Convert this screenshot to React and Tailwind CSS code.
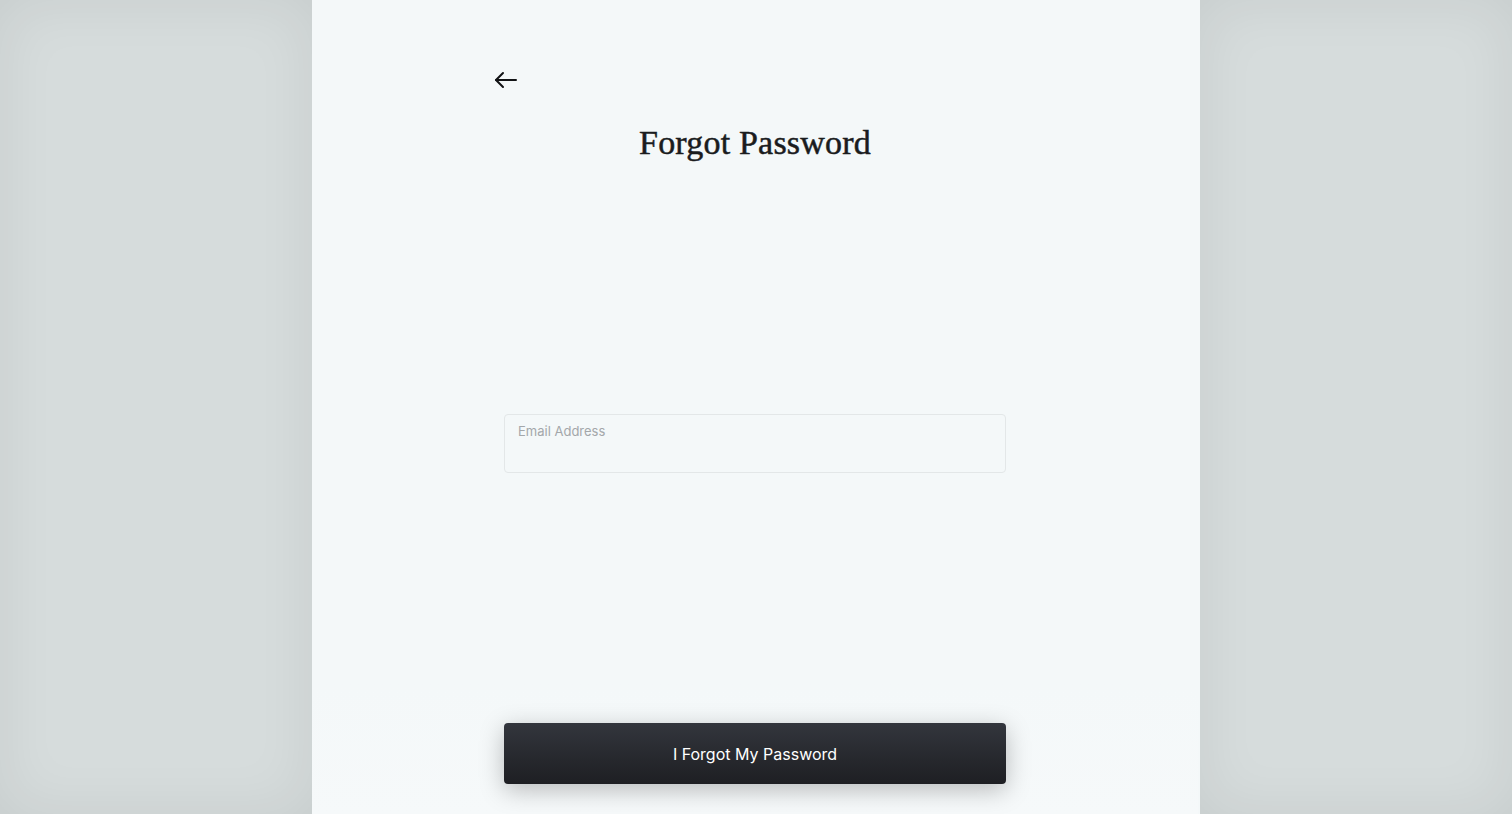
export default function App() {
  return (
    <div className="flex h-screen w-full bg-[#d6dcdc]" style={{ fontFamily: "Inter, 'Liberation Sans', sans-serif" }}>
      <div className="flex-1 shadow-[inset_0_0_60px_rgba(0,0,0,0.07)]" />
      <div className="relative flex w-[888px] flex-col items-center bg-[#f4f8f9] pr-[2px]">
        <div className="w-[522px] pt-[68px]">
          <button className="flex h-6 w-6 items-center justify-center text-[#111315]">
            <svg width="24" height="18" viewBox="0 0 24 18" fill="none" stroke="currentColor" strokeWidth="2" strokeLinecap="round" strokeLinejoin="round">
              <path d="M9 2 2 9l7 7" />
              <path d="M2 9h20" />
            </svg>
          </button>
        </div>
        <h1 className="mt-[29px] text-[34px] leading-[44px] tracking-[0.2px] text-[#1a1c1e] [-webkit-text-stroke:0.5px_#1a1c1e]" style={{ fontFamily: "'Liberation Serif', 'DejaVu Serif', serif" }}>
          Forgot Password
        </h1>
        <div className="mt-[249px] h-[59px] w-[502px] rounded-[4px] border border-[#e3e7e8] bg-[#f4f8f9] px-[13px] pt-[8px]">
          <div className="text-[13px] leading-[17px] text-[#a3a7aa]">Email Address</div>
        </div>
        <div className="flex-1" />
        <div className="flex w-full justify-center bg-gradient-to-b from-[#f4f8f9] to-[#f6f9fa] pt-[40px] pb-[30px]">
          <button className="h-[61px] w-[502px] rounded-[4px] bg-gradient-to-b from-[#33363d] to-[#1e1f23] pt-[1px] text-[16px] text-white shadow-[0_6px_24px_rgba(0,0,0,0.25)]">
            I Forgot My Password
          </button>
        </div>
      </div>
      <div className="flex-1 shadow-[inset_0_0_60px_rgba(0,0,0,0.07)]" />
    </div>
  );
}
